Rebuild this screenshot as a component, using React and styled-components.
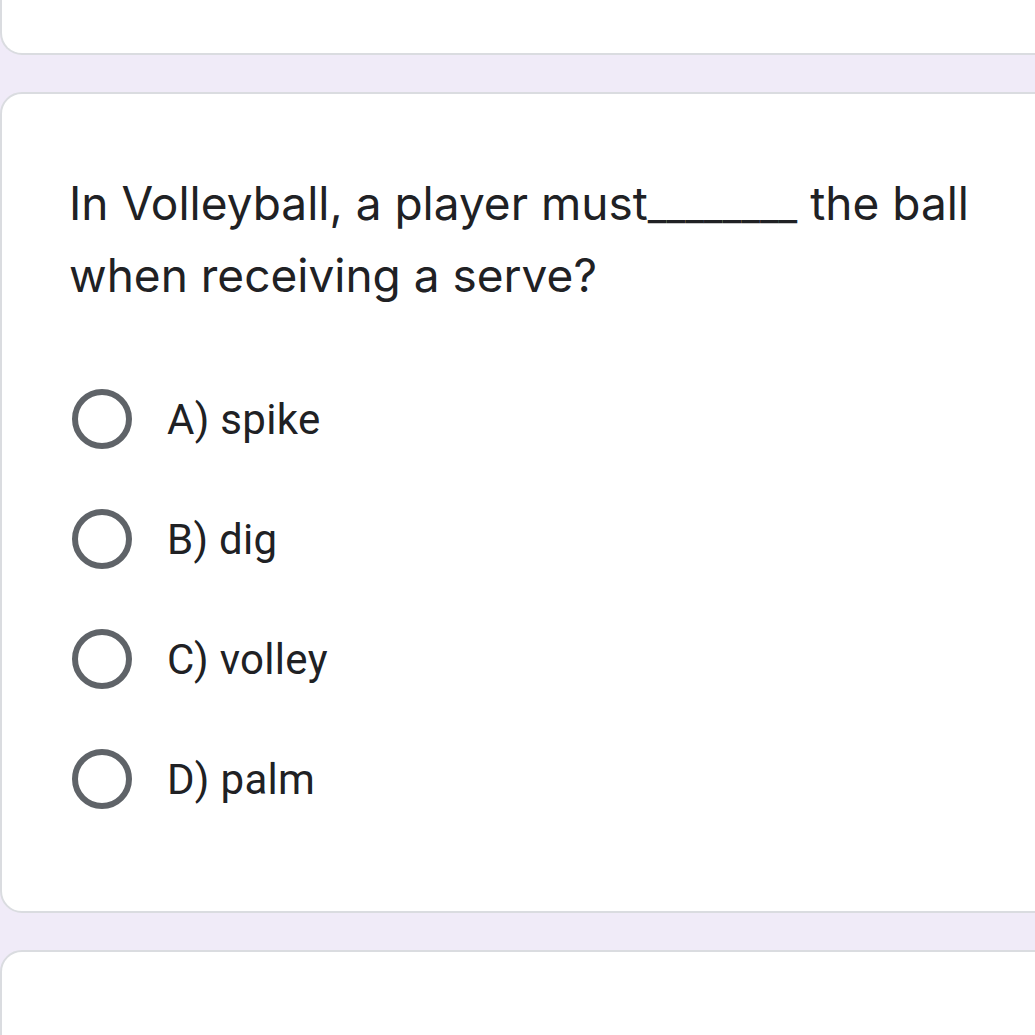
import React from 'react'
import styled, { createGlobalStyle } from 'styled-components'

const GlobalStyle = createGlobalStyle`
  html, body {
    margin: 0;
    padding: 0;
    background: #f0ebf8;
    overflow: hidden;
  }
`

const Page = styled.div`
  display: flex;
  flex-direction: column;
  gap: 37px;
  width: 1035px;
  height: 1035px;
  overflow: hidden;
  background: #f0ebf8;
`

const Card = styled.div`
  flex-shrink: 0;
  width: 1080px;
  box-sizing: border-box;
  background: #ffffff;
  border: 2.5px solid #dadce0;
  border-radius: 22px;
  height: ${(p) => p.height}px;
  ${(p) => p.cutTop && 'border-top: none; border-top-left-radius: 0; border-top-right-radius: 0;'}
`

const QuestionCard = styled(Card)`
  padding: 73px 0 0 70px;
`

const Question = styled.div`
  max-width: 960px;
  margin-left: -3px;
  font-family: Inter, "Noto Sans", sans-serif;
  font-size: 46px;
  line-height: 72px;
  color: #202124;
`

const Blank = styled.span`
  font-size: 41px;
  line-height: 1;
`

const Options = styled.div`
  display: flex;
  flex-direction: column;
  gap: 60px;
  margin-top: 78px;
`

const Option = styled.label`
  display: flex;
  align-items: center;
  gap: 35px;
  height: 60px;
  font-family: Roboto, "Noto Sans", sans-serif;
  font-size: 42px;
  letter-spacing: 0.3px;
  color: #202124;
`

const Radio = styled.span`
  flex-shrink: 0;
  width: 60px;
  height: 60px;
  box-sizing: border-box;
  border: 6px solid #5f6368;
  border-radius: 50%;
`

const options = ['A) spike', 'B) dig', 'C) volley', 'D) palm']

export default function App() {
  return (
    <Page>
      <GlobalStyle />
      <Card cutTop height={55} />
      <QuestionCard height={821}>
        <Question>
          In Volleyball, a player must<Blank>________</Blank> the ball when receiving a serve?
        </Question>
        <Options>
          {options.map((o) => (
            <Option key={o}>
              <Radio />
              {o}
            </Option>
          ))}
        </Options>
      </QuestionCard>
      <Card height={200} />
    </Page>
  )
}
